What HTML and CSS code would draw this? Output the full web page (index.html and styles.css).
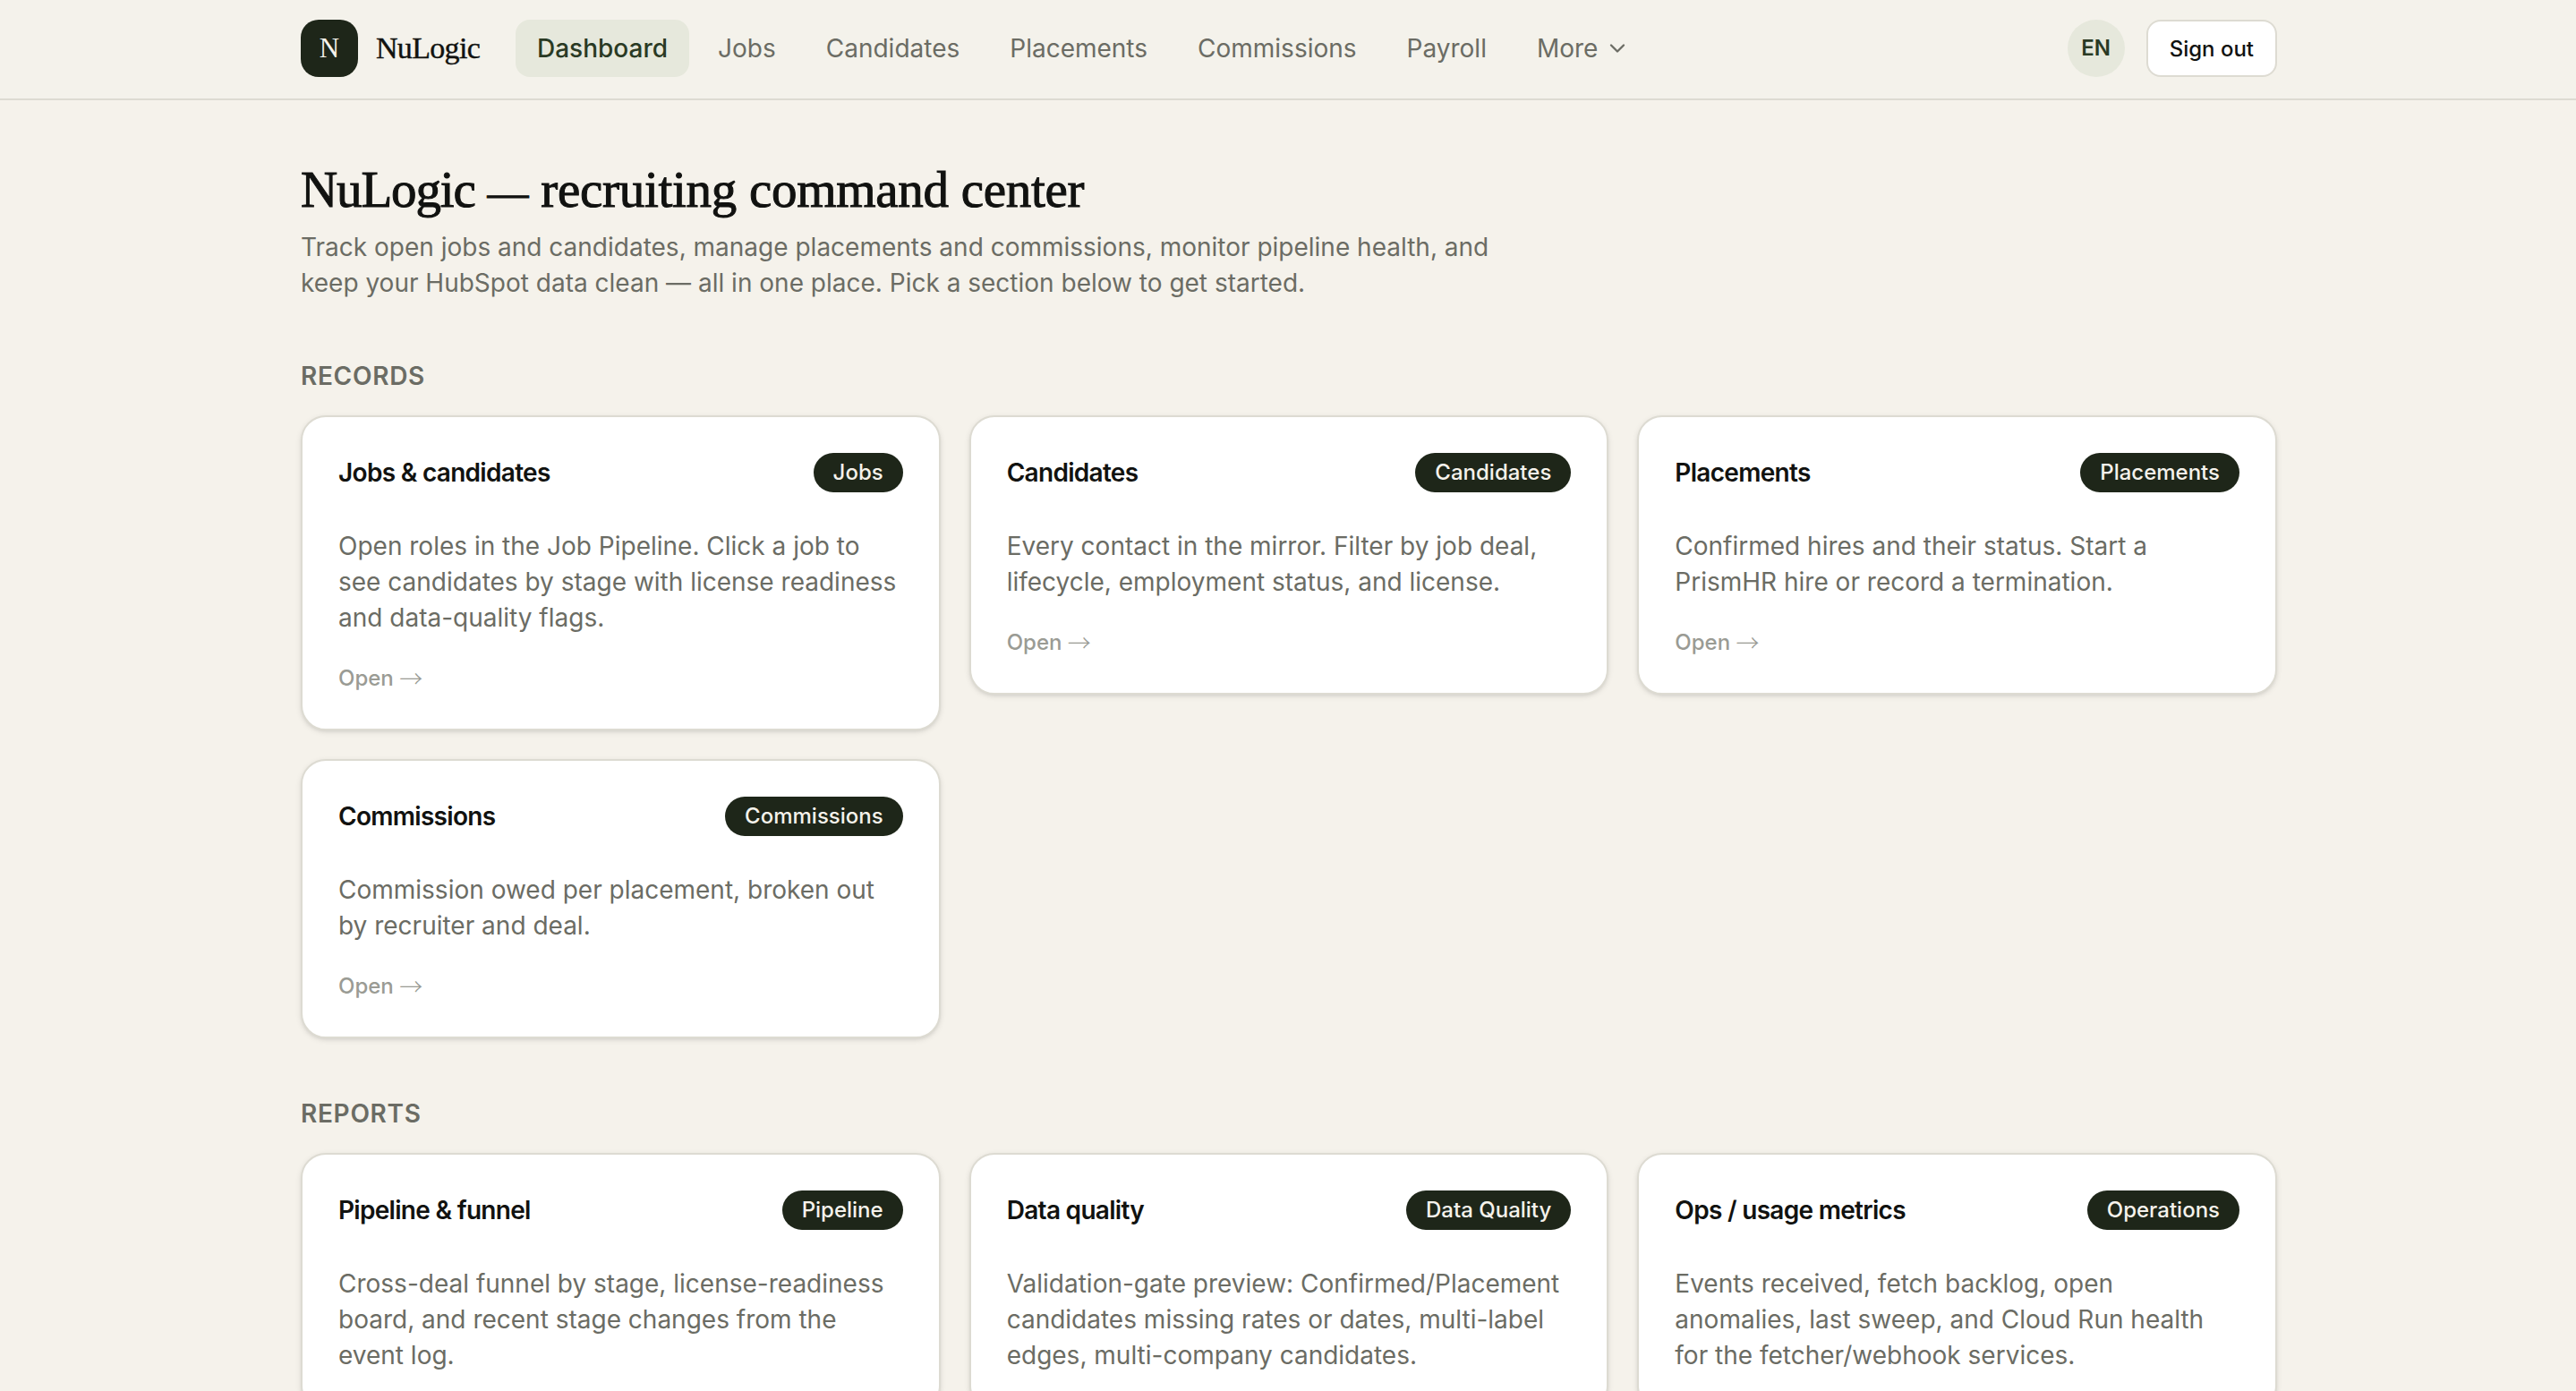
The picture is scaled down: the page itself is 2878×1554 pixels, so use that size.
FILE: index.html
```html
<!DOCTYPE html>
<html lang="en">
<head>
    <meta charset="UTF-8">
    <meta name="viewport" content="width=device-width, initial-scale=1.0">
    <title>NuLogic</title>
    <link rel="stylesheet" href="styles.css">
</head>
<body>

<header class="topbar">
    <div class="container topbar-inner">
        <a class="brand" href="#">
            <span class="brand-mark">N</span>
            <span class="brand-name">NuLogic</span>
        </a>
        <nav class="nav">
            <a class="nav-link active" href="#">Dashboard</a>
            <a class="nav-link" href="#">Jobs</a>
            <a class="nav-link" href="#">Candidates</a>
            <a class="nav-link" href="#">Placements</a>
            <a class="nav-link" href="#">Commissions</a>
            <a class="nav-link" href="#">Payroll</a>
            <a class="nav-link" href="#">More
                <svg class="chevron" viewBox="0 0 24 24" fill="none" stroke="currentColor" stroke-width="2" stroke-linecap="round" stroke-linejoin="round"><path d="m6 9 6 6 6-6"/></svg>
            </a>
        </nav>
        <div class="account">
            <span class="avatar">EN</span>
            <button class="sign-out">Sign out</button>
        </div>
    </div>
</header>

<main class="container main">
    <h1><span class="title-name">NuLogic</span> <span class="title-dash">—</span> recruiting command center</h1>
    <p class="intro">Track open jobs and candidates, manage placements and commissions, monitor pipeline health, and keep your HubSpot data clean — all in one place. Pick a section below to get started.</p>

    <section class="section">
        <h2>Records</h2>
        <div class="cards">
            <a class="card" href="#">
                <div class="card-head">
                    <h3>Jobs &amp; candidates</h3>
                    <span class="badge">Jobs</span>
                </div>
                <p>Open roles in the Job Pipeline. Click a job to see candidates by stage with license readiness and data-quality flags.</p>
                <span class="open">Open <span class="arrow">→</span></span>
            </a>
            <a class="card" href="#">
                <div class="card-head">
                    <h3>Candidates</h3>
                    <span class="badge">Candidates</span>
                </div>
                <p>Every contact in the mirror. Filter by job deal, lifecycle, employment status, and license.</p>
                <span class="open">Open <span class="arrow">→</span></span>
            </a>
            <a class="card" href="#">
                <div class="card-head">
                    <h3>Placements</h3>
                    <span class="badge">Placements</span>
                </div>
                <p>Confirmed hires and their status. Start a PrismHR hire or record a termination.</p>
                <span class="open">Open <span class="arrow">→</span></span>
            </a>
            <a class="card" href="#">
                <div class="card-head">
                    <h3>Commissions</h3>
                    <span class="badge">Commissions</span>
                </div>
                <p>Commission owed per placement, broken out by recruiter and deal.</p>
                <span class="open">Open <span class="arrow">→</span></span>
            </a>
        </div>
    </section>

    <section class="section">
        <h2>Reports</h2>
        <div class="cards">
            <a class="card" href="#">
                <div class="card-head">
                    <h3>Pipeline &amp; funnel</h3>
                    <span class="badge">Pipeline</span>
                </div>
                <p>Cross-deal funnel by stage, license-readiness board, and recent stage changes from the event log.</p>
            </a>
            <a class="card" href="#">
                <div class="card-head">
                    <h3>Data quality</h3>
                    <span class="badge">Data Quality</span>
                </div>
                <p>Validation-gate preview: Confirmed/Placement candidates missing rates or dates, multi-label edges, multi-company candidates.</p>
            </a>
            <a class="card" href="#">
                <div class="card-head">
                    <h3>Ops / usage metrics</h3>
                    <span class="badge">Operations</span>
                </div>
                <p>Events received, fetch backlog, open anomalies, last sweep, and Cloud Run health for the fetcher/webhook services.</p>
            </a>
        </div>
    </section>
</main>

</body>
</html>
```

FILE: styles.css
```css
* {
    box-sizing: border-box;
}
html {
    height: 100%;
    overflow: hidden;
}
body {
    font-family: Inter, sans-serif;
    font-size: 28px;
    line-height: 40px;
    background-color: #f5f2eb;
    color: #111210;
    margin: 0;
    height: 100%;
    overflow: hidden;
}
a {
    color: inherit;
    text-decoration: none;
}
h1, h2, h3, p {
    margin: 0;
}
.container {
    width: 2304px;
    margin: 0 auto;
    padding: 0 47px 0 49px;
}
.topbar {
    background-color: #f4f2eb;
    border-bottom: 2px solid #dddbd2;
}
.topbar-inner {
    display: flex;
    align-items: center;
    height: 110px;
    padding-bottom: 2px;
}
.brand {
    display: flex;
    align-items: center;
    gap: 20px;
    width: 240px;
    font-family: "Liberation Serif", serif;
}
.brand-mark {
    display: flex;
    align-items: center;
    justify-content: center;
    width: 64px;
    height: 64px;
    border-radius: 20px;
    background-color: #1e2619;
    color: #f5f2eb;
    font-size: 31px;
}
.brand-name {
    font-size: 34px;
    letter-spacing: -0.02em;
    -webkit-text-stroke: 0.4px;
}
.nav {
    display: flex;
    gap: 8px;
}
.nav-link {
    display: flex;
    align-items: center;
    gap: 8px;
    height: 64px;
    padding: 0 24px;
    border-radius: 16px;
    color: #6b6c64;
}
.nav-link.active {
    background-color: #e6e8dc;
    color: #2a3a24;
    font-weight: 500;
}
.chevron {
    width: 28px;
    height: 28px;
}
.account {
    display: flex;
    align-items: center;
    gap: 24px;
    margin-left: auto;
}
.avatar {
    display: flex;
    align-items: center;
    justify-content: center;
    width: 64px;
    height: 64px;
    border-radius: 50%;
    background-color: #e6e8dc;
    color: #2a3a24;
    font-size: 24px;
    font-weight: 600;
}
.sign-out {
    height: 64px;
    padding: 0 24px;
    border: 2px solid #dddbd2;
    border-radius: 16px;
    background-color: #fff;
    color: #111210;
    font: 500 24px Inter, sans-serif;
}
.main {
    padding-top: 64px;
}
h1 {
    font-family: "Liberation Serif", serif;
    font-size: 57px;
    font-weight: 400;
    line-height: 72px;
    letter-spacing: -0.005em;
    -webkit-text-stroke: 1px;
}
.title-name {
    letter-spacing: -0.02em;
}
.title-dash {
    font-size: 46px;
    line-height: 0;
}
.intro {
    width: 1344px;
    margin-top: 8px;
    color: #6b6c64;
}
.section {
    margin-top: 64px;
}
h2 {
    margin-bottom: 24px;
    font-size: 28px;
    font-weight: 600;
    letter-spacing: 0.025em;
    text-transform: uppercase;
    color: #6b6c64;
}
.cards {
    display: grid;
    grid-template-columns: repeat(3, 1fr);
    align-items: start;
    gap: 32px;
}
.card {
    padding: 40px;
    border: 2px solid #dddbd2;
    border-radius: 28px;
    background-color: #fff;
    box-shadow: 0 2px 6px rgba(0, 0, 0, 0.1), 0 2px 4px -2px rgba(0, 0, 0, 0.1);
}
.card-head {
    display: flex;
    align-items: center;
    justify-content: space-between;
    margin-bottom: 40px;
}
h3 {
    font-size: 28px;
    font-weight: 600;
    letter-spacing: -0.025em;
}
.badge {
    height: 44px;
    padding: 0 22px;
    border-radius: 22px;
    background-color: #1e2619;
    color: #f5f2eb;
    font-size: 24px;
    font-weight: 500;
    line-height: 44px;
}
.card p {
    color: #6b6c64;
}
.open {
    display: block;
    margin-top: 32px;
    font-size: 24px;
    font-weight: 500;
    line-height: 32px;
    color: #9a9b94;
}
.arrow {
    font-family: "Noto Sans CJK JP", sans-serif;
    font-size: 26px;
    font-weight: 300;
    line-height: 0;
    vertical-align: -2px;
}
```
